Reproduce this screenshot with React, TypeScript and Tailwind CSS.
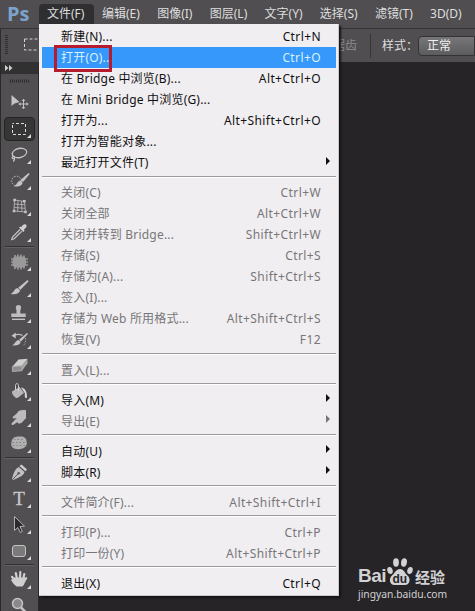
import React from 'react';
import clsx from 'clsx';

type Item = { label: string; keys?: string; sub?: boolean; off?: boolean; active?: boolean };

const menus = ['编辑(E)', '图像(I)', '图层(L)', '文字(Y)', '选择(S)', '滤镜(T)', '3D(D)'];

const groups: Item[][] = [
  [
    { label: '新建(N)...', keys: 'Ctrl+N' },
    { label: '打开(O)...', keys: 'Ctrl+O', active: true },
    { label: '在 Bridge 中浏览(B)...', keys: 'Alt+Ctrl+O' },
    { label: '在 Mini Bridge 中浏览(G)...' },
    { label: '打开为...', keys: 'Alt+Shift+Ctrl+O' },
    { label: '打开为智能对象...' },
    { label: '最近打开文件(T)', sub: true },
  ],
  [
    { label: '关闭(C)', keys: 'Ctrl+W', off: true },
    { label: '关闭全部', keys: 'Alt+Ctrl+W', off: true },
    { label: '关闭并转到 Bridge...', keys: 'Shift+Ctrl+W', off: true },
    { label: '存储(S)', keys: 'Ctrl+S', off: true },
    { label: '存储为(A)...', keys: 'Shift+Ctrl+S', off: true },
    { label: '签入(I)...', off: true },
    { label: '存储为 Web 所用格式...', keys: 'Alt+Shift+Ctrl+S', off: true },
    { label: '恢复(V)', keys: 'F12', off: true },
  ],
  [{ label: '置入(L)...', off: true }],
  [
    { label: '导入(M)', sub: true },
    { label: '导出(E)', sub: true, off: true },
  ],
  [
    { label: '自动(U)', sub: true },
    { label: '脚本(R)', sub: true },
  ],
  [{ label: '文件简介(F)...', keys: 'Alt+Shift+Ctrl+I', off: true }],
  [
    { label: '打印(P)...', keys: 'Ctrl+P', off: true },
    { label: '打印一份(Y)', keys: 'Alt+Shift+Ctrl+P', off: true },
  ],
  [{ label: '退出(X)', keys: 'Ctrl+Q' }],
];

// Tool glyphs, drawn on a 38x26 cell
const tools: { name: string; art: React.ReactNode; plain?: boolean }[][] = [
  [
    {
      name: 'move',
      plain: true,
      art: (
        <>
          <path d="M11.500 5v11l3-2.500 5-1.500z" fill="#c4c4c4" />
          <path d="M23.500 10v8M19.500 14h8" stroke="#c4c4c4" />
          <path d="M23.500 8.800l1.800 2.200h-3.600zM23.500 19.200l1.800-2.200h-3.600zM18.300 14l2.200-1.800v3.600zM28.700 14l-2.200-1.800v3.600z" fill="#c4c4c4" />
        </>
      ),
    },
    { name: 'marquee', art: <rect x="12.500" y="7.500" width="13" height="11" fill="none" stroke="#dcdcdc" strokeDasharray="3 2" strokeDashoffset="1.500" /> },
    {
      name: 'lasso',
      art: (
        <g fill="none" stroke="#c4c4c4" strokeWidth="1.300">
          <ellipse cx="19.500" cy="11" rx="7.300" ry="4.600" transform="rotate(-12 19.500 11)" />
          <path d="M13.500 14c-2 1-1.500 3 .2 2.600 1.500-.6.8-2.400-.4-2M14.500 16c.5 1.500-.2 2.500-1.300 3.500" />
        </g>
      ),
    },
    {
      name: 'quick selection',
      art: (
        <>
          <circle cx="16.500" cy="13" r="4.800" fill="none" stroke="#c4c4c4" strokeDasharray="1.500 1.300" />
          <path d="M28.500 5l1.200 1-6.700 8-2.500-2z" fill="#c4c4c4" />
          <path d="M20 12.500l2.700 2.200c-.5 3-4 4.600-8.700 3.600 2.500-.8 3-4.500 6-5.800z" fill="#c4c4c4" />
        </>
      ),
    },
    {
      name: 'mesh crop',
      art: (
        <>
          <path d="M14.500 6l10 1.500 1 10.500-11.500-1zM18 6.500l-.3 11M21.500 7l.5 10.700M14.300 10l10.500.7M14.100 13.500l11 .8" fill="none" stroke="#b4b4b4" strokeWidth=".9" />
          <path d="M13.300 4.700h2.600v2.600h-2.600zM23 6h2.600v2.600H23zM12.700 15.700h2.600v2.600h-2.600zM24.200 16.700h2.600v2.600h-2.600z" fill="#c4c4c4" />
        </>
      ),
    },
    {
      name: 'eyedropper',
      art: (
        <>
          <path d="M20 9.500L12.500 17l-.8 2.500 2.500-.8 7.600-7.500" fill="none" stroke="#c4c4c4" strokeWidth="1.200" />
          <path d="M19 7.500l1.300-1 1 .8c1-2 2.500-3.300 4-3 1.500.5 1.700 2.300.5 3.500l-2 2 .8 1-1.200 1.300z" fill="#d0d0d0" />
        </>
      ),
    },
  ],
  [
    {
      name: 'heal',
      art: (
        <>
          <path d="M15 6v14M18 5.500v15M21 5.500v15M24 6.500v13M11 10h17M11 13h17M11 16h17" stroke="#b8b8b8" strokeWidth="1.200" />
          <rect x="12.500" y="7.500" width="13.500" height="11" rx="4" fill="#9a9a9a" />
        </>
      ),
    },
    {
      name: 'brush',
      art: (
        <>
          <path d="M27.500 5l1.200 1.200-8.200 8.500-2.300-2z" fill="#c4c4c4" />
          <path d="M17.500 13l2.700 2.300c-1 3.700-5.200 4.700-9.700 3.600 3-.5 3.700-5.400 7-5.900z" fill="#c4c4c4" />
        </>
      ),
    },
    {
      name: 'stamp',
      art: (
        <>
          <path d="M18.500 4c2 0 3 1.500 2.600 3-.3 1.500-1 2-.7 5.500h5.300V16H11.300v-3.500h5.200c.3-3.500-.3-4-.7-5.500-.4-1.500.7-3 2.700-3z" fill="#bdbdbd" />
          <path d="M12 18.300h13" stroke="#c4c4c4" strokeWidth="1.400" />
        </>
      ),
    },
    {
      name: 'history brush',
      art: (
        <>
          <path d="M14 8.500c3-1.500 6-1.500 8.500 0" fill="none" stroke="#bcbcbc" strokeWidth="1.400" />
          <path d="M11.500 8.800l4.200-3.300v6zM27 6l1 .8-7 7.700-2-1.700zM18.500 13l2.300 2c-1 3-4.500 4.200-8.800 3.300 2.800-.5 3.300-4.800 6.500-5.300z" fill="#c4c4c4" />
          <path d="M25.500 11c.6 3-.5 6-2.500 8" fill="none" stroke="#aaa" strokeDasharray="1.500 1.300" />
        </>
      ),
    },
    {
      name: 'eraser',
      art: (
        <>
          <path d="M18.500 6.500l9-.8-5.500 7-9.700 1z" fill="#cfcfcf" />
          <path d="M12.300 13.700l9.700-1v5l-9.500.8z" fill="#8f8f8f" stroke="#b8b8b8" strokeWidth=".8" />
          <path d="M22 12.700l5.500-7v4.500L22 17.700z" fill="#a8a8a8" />
        </>
      ),
    },
    {
      name: 'bucket',
      art: (
        <>
          <path d="M12 12.500l7.500-4.500 4.500 6-6.500 5c-2 .6-6-3.500-5.500-6.500z" fill="#b8b8b8" />
          <path d="M15.500 11V6.500c0-2.500 3-2.500 3 0V12" fill="none" stroke="#d0d0d0" />
          <path d="M21 8.500c4 .5 6.300 4 6 10.300-2 .7-2.800-.8-2-4.300z" fill="#d5d5d5" />
        </>
      ),
    },
    {
      name: 'smudge',
      art: (
        <path d="M11.500 18.500l5.200-5.500c-1.500.3-3.700 1-4.200-.3.500-1.800 3.500-2.700 5-5.200 1.500-2.300 4-2.700 8.500-2.200v8c-2.500 1.500-3 4.700-6.500 5.200-1.500 0-2-.5-2-1.500l-4 2.700c-1.300.7-2.500-.2-2-1.200z" fill="#bcbcbc" />
      ),
    },
    {
      name: 'sponge',
      art: (
        <>
          <path d="M12 9c1-3 5-4 8-3.500 3-.5 6.500 1 6.500 4.500 1 3-.3 6.500-4 7.500-3 1-8 1-10-1-1.800-2-1.500-4.500-.5-7.500z" fill="#b0b0b0" />
          <path d="M14 8.500h10M12.500 11.500h13M13 14.500h12" stroke="#777" strokeWidth=".8" strokeDasharray="1.500 2" />
        </>
      ),
    },
  ],
  [
    {
      name: 'pen',
      art: (
        <>
          <path d="M21.500 4.500l5.500 5-1.500 1.800-6-5.300z" fill="#d0d0d0" />
          <path d="M18.800 7l5.700 5c-1 3.500-4 5-11.500 8L12 19c1.500-6.500 3.500-10.500 6.800-12z" fill="#c0c0c0" />
          <path d="M12.500 19.500l5.700-5.800" stroke="#555" />
          <circle cx="18.700" cy="13.200" r="1.200" fill="#555" />
        </>
      ),
    },
    {
      name: 'type',
      art: <text x="19" y="19" textAnchor="middle" fontFamily="Liberation Serif, serif" fontSize="19" fill="#c8c8c8" stroke="#c8c8c8" strokeWidth=".3">T</text>,
    },
    {
      name: 'path selection',
      art: <path d="M14.500 4.500v14l3.300-3 2.500 5 2-1-2.300-5 4.500-.3z" fill="#2a2a2a" stroke="#bdbdbd" strokeWidth=".9" />,
    },
    { name: 'rounded rectangle', art: <rect x="12.500" y="7.500" width="13" height="11" rx="2.500" fill="#7a7a7a" stroke="#c4c4c4" /> },
  ],
  [
    {
      name: 'hand',
      art: (
        <>
          <path d="M14.500 13L12 9.800M17 12l-1.200-6M20 12l.3-7M23 13l1.300-6" stroke="#cfcfcf" strokeWidth="2.200" strokeLinecap="round" />
          <path d="M14 10.500h10.300l2.300-.3c1 .3.800 1.300 0 2.200-1.600 2-2.100 5-4.100 7.100h-6c-1.500-1.500-4.500-4-5.500-6.500.5-1.200 2-.5 3 .6z" fill="#cfcfcf" />
        </>
      ),
    },
    {
      name: 'zoom',
      plain: true,
      art: (
        <>
          <circle cx="17.500" cy="10.500" r="5" fill="#8a8a8a" stroke="#c4c4c4" strokeWidth="1.500" />
          <path d="M21 14.500l5.500 5.500" stroke="#c4c4c4" strokeWidth="2.500" />
        </>
      ),
    },
  ],
];

const Toolbox: React.FC = () => (
  <div className="flex w-[39px] shrink-0 flex-col border-x border-[#2a292a] bg-[#514f51]">
    <div className="flex h-3 shrink-0 items-center bg-[#323132] pl-1">
      <svg width="8" height="6" viewBox="0 0 8 6" fill="#cfcfcf"><path d="M0 0l3.500 3L0 6zM4 0l3.500 3L4 6z" /></svg>
    </div>
    <div className="flex h-4 shrink-0 justify-center pt-[5px]">
      <svg width="20" height="4" viewBox="0 0 20 4"><path d="M0 2h20" stroke="#2d2d2d" strokeWidth="3" strokeDasharray="1 1" /></svg>
    </div>
    {tools.map((group, i) => (
      <React.Fragment key={i}>
        {i > 0 && (
          <div className="h-[3px] shrink-0 px-1">
            <div className="h-[2px] border-b border-[#636263] bg-[#333233]" />
          </div>
        )}
        {group.map(tool => (
          <div key={tool.name} className="relative h-[26px] shrink-0">
            {tool.name === 'marquee' && <div className="absolute top-px left-[3px] h-[24px] w-[31px] rounded-sm border border-[#242424] bg-[#373637]" />}
            <svg className="relative -ml-px block" width="38" height="26" viewBox="0 0 38 26" aria-label={tool.name}>
              {tool.art}
              {!tool.plain && <path d="M31 18v4h-4z" fill="#d8d8d8" />}
            </svg>
          </div>
        ))}
      </React.Fragment>
    ))}
  </div>
);

const MenuRow: React.FC<{ item: Item; low: boolean }> = ({ item, low }) => (
  <li
    className={clsx(
      'relative flex h-[21px] items-center justify-between pr-[15px] pl-[19px]',
      low ? 'leading-[23px]' : 'leading-[21px]',
      item.active ? 'bg-[#3598fa] text-[#d9f1ff]' : item.off ? 'text-[#777678]' : 'text-[#111]'
    )}
  >
    <span className={clsx('tracking-[0.2px]', low && 'pt-[2px]')}>{item.label}</span>
    {item.keys && <span className={clsx('tracking-[0.4px]', low && 'pt-[2px]')}>{item.keys}</span>}
    {item.sub && (
      <svg className="-mr-[9px] mb-1" width="4" height="8" viewBox="0 0 4 8" fill="currentColor"><path d="M0 0l4 4-4 4z" /></svg>
    )}
    {item.active && <div className="absolute -top-[2px] left-[12px] h-[27px] w-[58px] border-[3px] border-[#b51c2e]" />}
  </li>
);

const FileMenu: React.FC = () => (
  <div className="absolute top-[24px] left-[39px] w-[300px] border-r border-b border-[#c9c8ca] bg-[#f0eef1] pt-[2px] pr-[2px] pb-[2px] pl-[3px] text-[12px] shadow-[2px_2px_2px_#151415]">
    {groups.map((group, i) => (
      <React.Fragment key={i}>
        {i > 0 && <div className="h-[9px] pt-[3px]"><div className="h-[2px] border-t border-[#9b9a9c] bg-white" /></div>}
        <ul>
          {group.map(item => <MenuRow key={item.label} item={item} low={i > 1} />)}
        </ul>
      </React.Fragment>
    ))}
  </div>
);

const Watermark: React.FC = () => (
  <div className="absolute top-[556px] left-[358px] w-[90px] text-[#d2d1d3]">
    <div className="flex h-[30px] items-end">
      <span className="w-[28px] font-['Liberation_Sans'] text-[19px] leading-[20px] font-bold tracking-[-0.5px]">Bai</span>
      <svg className="shrink-0" width="28" height="30" viewBox="0 0 28 30" fill="currentColor">
        <ellipse cx="4" cy="14.500" rx="2.700" ry="3.600" transform="rotate(-15 4 14.500)" />
        <ellipse cx="10" cy="6.500" rx="2.900" ry="4.200" />
        <ellipse cx="18" cy="6.500" rx="2.900" ry="4.200" transform="rotate(10 18 6.500)" />
        <ellipse cx="24" cy="14.500" rx="2.700" ry="3.600" transform="rotate(15 24 14.500)" />
        <path d="M14 13c4 0 4.500 4 7.500 6.500 3.500 3 2.500 9.500-2.500 9.500H8.500C3.500 29 2.500 22.500 6 19.500 9 17 10 13 14 13z" />
        <text x="13.800" y="26.500" textAnchor="middle" fontFamily="Liberation Sans, sans-serif" fontWeight="bold" fontSize="12" fill="#262427">du</text>
      </svg>
      <span className="ml-px font-['Noto_Sans_CJK_SC'] text-[15px] leading-[19px] font-bold whitespace-nowrap">经验</span>
    </div>
    <div className="font-['Noto_Sans'] text-[10.3px] leading-[16px]">jingyan.baidu.com</div>
  </div>
);

const App: React.FC = () => (
  <div className="relative flex h-[611px] w-[475px] flex-col overflow-hidden bg-[#262427] font-['Noto_Sans','Noto_Sans_CJK_SC',sans-serif] whitespace-nowrap">
    <header className="flex h-[28px] shrink-0 bg-[#504e50] text-[12px] text-[#dededf]">
      <div className="w-[39px] pl-[7px] font-['Open_Sans'] text-[20px] leading-[27px] font-bold text-[#7ba3cb]">Ps</div>
      <div className="mt-1 h-[20px] w-[55px] rounded-t-sm bg-[#2f2e30] pl-[8px] leading-[20px]">文件(F)</div>
      <nav className="ml-[8px] flex gap-[17.3px] leading-[28px]">
        {menus.map(m => <span key={m}>{m}</span>)}
      </nav>
    </header>
    <div className="flex h-[34px] shrink-0 items-center border-t border-[#343335] bg-[#504e50] text-[12px]">
      <svg width="39" height="33" viewBox="0 0 39 33">
        <path d="M.5 0v33" stroke="#2d2d2d" />
        <path d="M6.500 6v20" stroke="#2f2f2f" strokeWidth="3" strokeDasharray="1 1" />
        <path d="M24.500 10v11h14M24.500 10h14" fill="none" stroke="#d5d5d5" strokeDasharray="3 2" />
      </svg>
      <span className="ml-[294px] text-[#8c8b8d]">锯齿</span>
      <div className="ml-[13px] h-[24px] border-l border-[#343335]" />
      <span className="ml-[11px] text-[#dededf]">样式：</span>
      <div className="h-[20px] flex-1 rounded-l-sm border border-[#333] bg-linear-to-b from-[#777678] to-[#5c5b5d] pl-[8px] leading-[18px] text-[#f0f0f0]">正常</div>
    </div>
    <div className="flex min-h-0 flex-1">
      <Toolbox />
    </div>
    <FileMenu />
    <Watermark />
  </div>
);

export default App;
